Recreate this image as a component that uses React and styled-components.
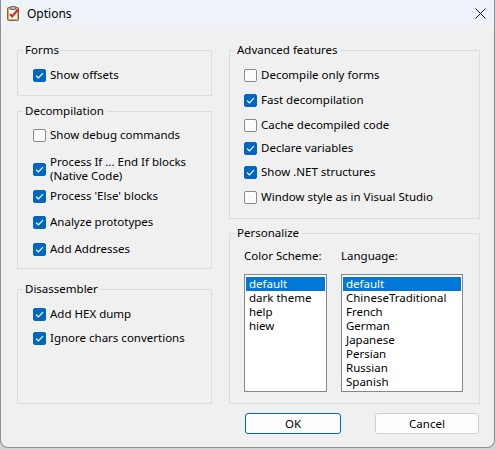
import React from "react";
import styled, { createGlobalStyle } from "styled-components";

const GlobalStyle = createGlobalStyle`
  body {
    margin: 0;
    background: #d4d4d4;
    font-family: "Noto Sans", "Liberation Sans", sans-serif;
    font-size: 11.5px;
    color: #000;
  }
`;

const Window = styled.div`
  width: 495px;
  height: 448px;
  box-sizing: border-box;
  border: 1px solid #8f8f8f;
  border-top: none;
  border-radius: 0 0 8px 8px;
  background: #f0f0f0;
  display: flex;
  flex-direction: column;
  overflow: hidden;
`;

const TitleBar = styled.div`
  height: 26px;
  flex: none;
  display: flex;
  align-items: center;
  background: #eef3f9;
  padding-left: 4px;
`;

const TitleText = styled.span`
  margin-left: 5px;
  font-size: 12px;
`;

const CloseButton = styled.div`
  margin-left: auto;
  margin-right: 8px;
  width: 11px;
  height: 11px;
  display: flex;
`;

const Body = styled.div`
  display: flex;
  gap: 17px;
  padding: 16px 0 0 16px;
`;

const Column = styled.div`
  width: ${(p) => p.$width}px;
  display: flex;
  flex-direction: column;
`;

const Group = styled.fieldset`
  box-sizing: border-box;
  margin: ${(p) => p.$mt || 0}px 0 0 0;
  padding: 0;
  min-width: 0;
  height: ${(p) => p.$height}px;
  border: 1px solid #dcdcdc;
`;

const Legend = styled.legend`
  padding: 0 2px;
  margin-left: 5px;
  line-height: 16px;
  font-size: 11.5px;
`;

const GroupContent = styled.div`
  padding-left: ${(p) => p.$pl}px;
  display: flex;
  flex-direction: column;
`;

const CheckRow = styled.label`
  display: flex;
  align-items: center;
  gap: 4px;
  margin-top: ${(p) => p.$mt}px;
  line-height: 14px;
  font-size: 11.5px;
`;

const Box = styled.span`
  width: 13px;
  height: 13px;
  box-sizing: border-box;
  flex: none;
  border-radius: 2px;
  display: flex;
  align-items: center;
  justify-content: center;
  background: ${(p) => (p.$checked ? "#0067c0" : "#fbfbfb")};
  border: 1px solid ${(p) => (p.$checked ? "#0067c0" : "#8a8a8a")};
`;

const Lists = styled.div`
  display: flex;
  gap: 14px;
  margin-top: 8px;
`;

const ListColumn = styled.div`
  display: flex;
  flex-direction: column;
`;

const ListLabel = styled.div`
  line-height: 14px;
  font-size: 11.5px;
`;

const ListBox = styled.div`
  margin-top: 11px;
  width: ${(p) => p.$width}px;
  height: 118px;
  box-sizing: border-box;
  border: 1px solid #828790;
  background: #fff;
  padding: 2px 1px;
`;

const ListItem = styled.div`
  line-height: 14px;
  height: 14px;
  padding-left: 3px;
  white-space: nowrap;
  background: ${(p) => (p.$selected ? "#0078d7" : "transparent")};
  color: ${(p) => (p.$selected ? "#fff" : "#000")};
`;

const ButtonRow = styled.div`
  display: flex;
  gap: 34px;
  margin-top: 9px;
  padding-left: 16px;
`;

const Button = styled.button`
  width: ${(p) => p.$width}px;
  height: 21px;
  box-sizing: border-box;
  border-radius: 3px;
  background: #fdfdfd;
  border: 1px solid ${(p) => (p.$primary ? "#0067c0" : "#d0d0d0")};
  font-family: inherit;
  font-size: 11.5px;
  color: #000;
  padding: 0;
`;

const Check = ({ checked, children, mt }) => (
  <CheckRow $mt={mt}>
    <Box $checked={checked}>
      {checked && (
        <svg width="9" height="9" viewBox="0 0 9 9">
          <path d="M1 4.6 L3.4 6.8 L8 2.2" stroke="#fff" strokeWidth="1.2" fill="none" />
        </svg>
      )}
    </Box>
    <span>{children}</span>
  </CheckRow>
);

const ClipboardIcon = () => (
  <svg width="17" height="17" viewBox="0 0 17 17">
    <rect x="2.5" y="2.5" width="11" height="13" rx="1" fill="#e8a24c" stroke="#8d5f28" />
    <rect x="4" y="4.5" width="8" height="9.5" fill="#fff" />
    <rect x="5.5" y="1.5" width="5" height="3" rx="0.5" fill="#b5b5b5" stroke="#6c6c6c" />
    <path d="M5 9 L7.2 11.5 L13 4.5" stroke="#d3202a" strokeWidth="2" fill="none" />
  </svg>
);

const colorSchemes = ["default", "dark theme", "help", "hiew"];
const languages = [
  "default",
  "ChineseTraditional",
  "French",
  "German",
  "Japanese",
  "Persian",
  "Russian",
  "Spanish",
];

const App = () => {
  return (
    <>
      <GlobalStyle />
      <Window>
        <TitleBar>
          <ClipboardIcon />
          <TitleText>Options</TitleText>
          <CloseButton>
            <svg width="11" height="11" viewBox="0 0 11 11">
              <path d="M0.5 0.5 L10.5 10.5 M10.5 0.5 L0.5 10.5" stroke="#1a1a1a" strokeWidth="1" />
            </svg>
          </CloseButton>
        </TitleBar>
        <Body>
          <Column $width={195}>
            <Group $height={54}>
              <Legend>Forms</Legend>
              <GroupContent $pl={15}>
                <Check checked mt={10}>Show offsets</Check>
              </GroupContent>
            </Group>
            <Group $height={166} $mt={7}>
              <Legend>Decompilation</Legend>
              <GroupContent $pl={15}>
                <Check mt={9}>Show debug commands</Check>
                <Check checked mt={13}>
                  Process If ... End If blocks
                  <br />
                  (Native Code)
                </Check>
                <Check checked mt={6}>Process 'Else' blocks</Check>
                <Check checked mt={12}>Analyze prototypes</Check>
                <Check checked mt={13}>Add Addresses</Check>
              </GroupContent>
            </Group>
            <Group $height={123} $mt={12}>
              <Legend>Disassembler</Legend>
              <GroupContent $pl={15}>
                <Check checked mt={10}>Add HEX dump</Check>
                <Check checked mt={10}>Ignore chars convertions</Check>
              </GroupContent>
            </Group>
          </Column>
          <Column $width={251}>
            <Group $height={177}>
              <Legend>Advanced features</Legend>
              <GroupContent $pl={14}>
                <Check mt={10}>Decompile only forms</Check>
                <Check checked mt={11}>Fast decompilation</Check>
                <Check mt={11}>Cache decompiled code</Check>
                <Check checked mt={9}>Declare variables</Check>
                <Check checked mt={10}>Show .NET structures</Check>
                <Check mt={11}>Window style as in Visual Studio</Check>
              </GroupContent>
            </Group>
            <Group $height={179} $mt={6}>
              <Legend>Personalize</Legend>
              <GroupContent $pl={14}>
                <Lists>
                  <ListColumn>
                    <ListLabel>Color Scheme:</ListLabel>
                    <ListBox $width={83}>
                      {colorSchemes.map((s, i) => (
                        <ListItem key={s} $selected={i === 0}>
                          {s}
                        </ListItem>
                      ))}
                    </ListBox>
                  </ListColumn>
                  <ListColumn>
                    <ListLabel>Language:</ListLabel>
                    <ListBox $width={122}>
                      {languages.map((s, i) => (
                        <ListItem key={s} $selected={i === 0}>
                          {s}
                        </ListItem>
                      ))}
                    </ListBox>
                  </ListColumn>
                </Lists>
              </GroupContent>
            </Group>
            <ButtonRow>
              <Button $primary $width={96}>OK</Button>
              <Button $width={104}>Cancel</Button>
            </ButtonRow>
          </Column>
        </Body>
      </Window>
    </>
  );
};

export default App;
